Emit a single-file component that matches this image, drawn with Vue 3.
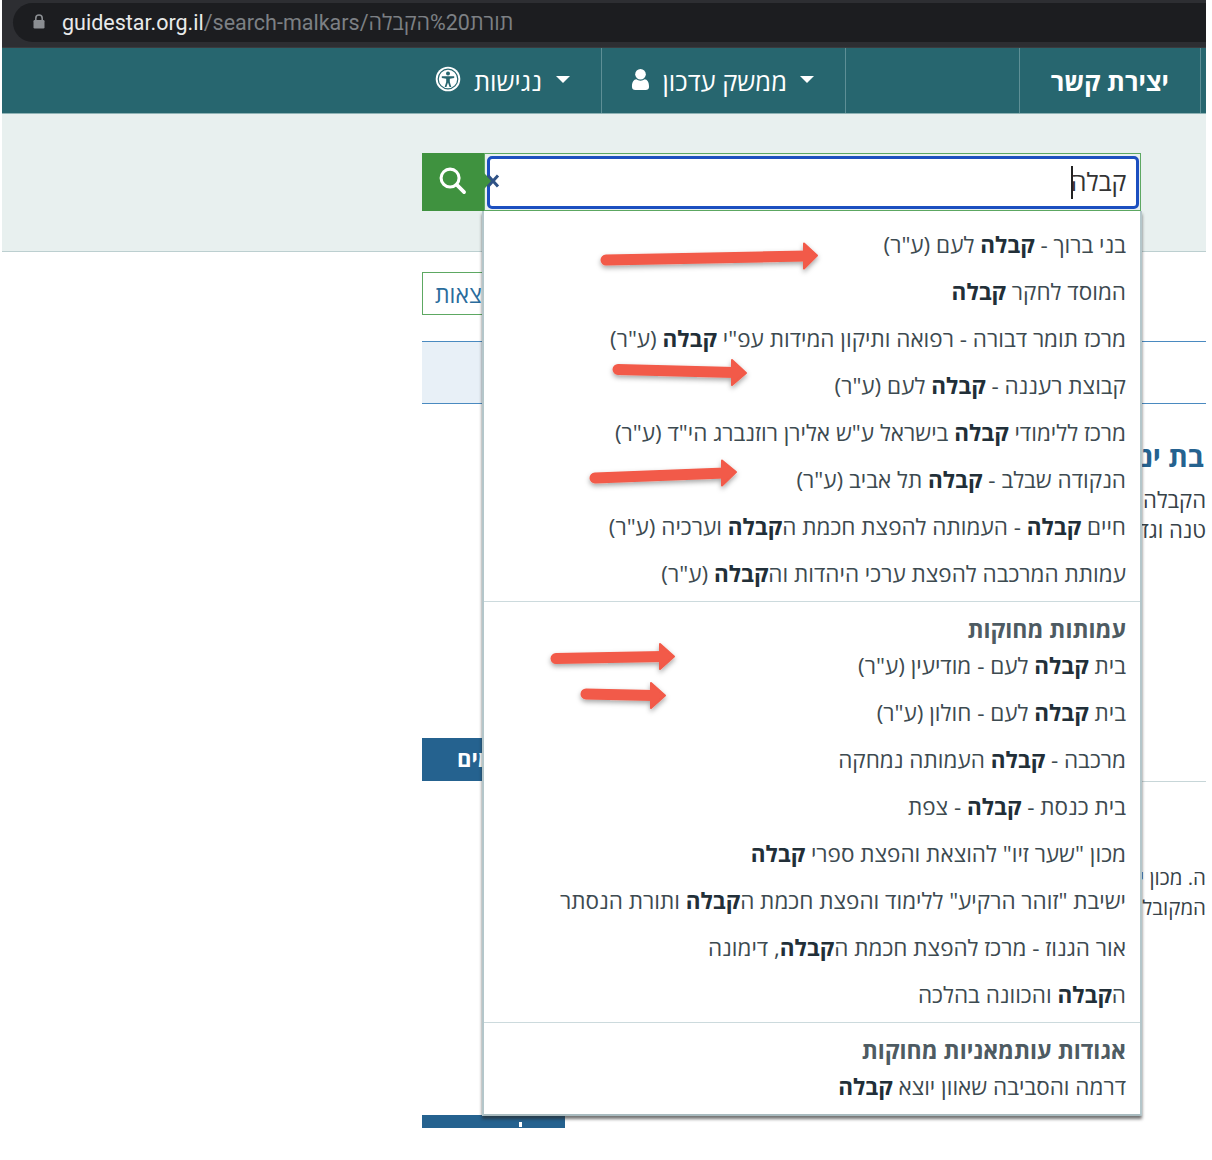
<script setup>
const group1 = [
  'בני ברוך - *קבלה* לעם (ע"ר)',
  'המוסד לחקר *קבלה*',
  'מרכז תומר דבורה - רפואה ותיקון המידות עפ"י *קבלה* (ע"ר)',
  'קבוצת רעננה - *קבלה* לעם (ע"ר)',
  'מרכז ללימודי *קבלה* בישראל ע"ש אלירן רוזנברג הי"ד (ע"ר)',
  'הנקודה שבלב - *קבלה* תל אביב (ע"ר)',
  'חיים *קבלה* - העמותה להפצת חכמת ה*קבלה* וערכיה (ע"ר)',
  'עמותת המרכבה להפצת ערכי היהדות וה*קבלה* (ע"ר)',
]
const group2 = [
  'בית *קבלה* לעם - מודיעין (ע"ר)',
  'בית *קבלה* לעם - חולון (ע"ר)',
  'מרכבה - *קבלה* העמותה נמחקה',
  'בית כנסת - *קבלה* - צפת',
  'מכון "שער זיו" להוצאת והפצת ספרי *קבלה*',
  'ישיבת "זוהר הרקיע" ללימוד והפצת חכמת ה*קבלה* ותורת הנסתר',
  'אור הגנוז - מרכז להפצת חכמת ה*קבלה*, דימונה',
  'ה*קבלה* והכוונה בהלכה',
]
const group3 = ['דרמה והסביבה שאוון יוצא *קבלה*']
const groups = [
  { title: '', rows: group1 },
  { title: 'עמותות מחוקות', rows: group2 },
  { title: 'אגודות עותמאניות מחוקות', rows: group3 },
]
const parts = (s) => s.split('*').map((text, i) => ({ text, bold: i % 2 === 1 }))
const arrows = [
  { x1: 606, y1: 260, x2: 804, y2: 256, tx: 817, ty: 255.5 },
  { x1: 618, y1: 369.5, x2: 732, y2: 372.5, tx: 746, ty: 373 },
  { x1: 595, y1: 478, x2: 722, y2: 473, tx: 736, ty: 472 },
  { x1: 556, y1: 658.5, x2: 660, y2: 656.5, tx: 674, ty: 656.5 },
  { x1: 586, y1: 694, x2: 651, y2: 695.5, tx: 665, ty: 695.5 },
]
const head = (a) => `${a.x2},${a.y2 - 12.5} ${a.tx},${a.ty} ${a.x2},${a.y2 + 12.5}`
</script>

<template>
  <div class="shot">
    <div class="browser">
      <div class="pill">
        <svg class="lock" viewBox="0 0 12 15" width="12" height="15">
          <path d="M2.8 6.5V4.2a3.2 3.2 0 0 1 6.4 0v2.3" fill="none" stroke="#8b8e92" stroke-width="1.6" />
          <rect x="0.5" y="6" width="11" height="8.5" rx="1.2" fill="#8b8e92" />
        </svg>
        <span class="url"><span class="host">guidestar.org.il</span><span class="path">/search-malkars/תורת%20הקבלה</span></span>
      </div>
    </div>

    <nav class="nav">
      <div class="cell cell-edge"></div>
      <div class="cell cell-contact">יצירת קשר</div>
      <div class="cell cell-empty"></div>
      <div class="cell cell-admin">
        <i class="caret"></i>
        <span>ממשק עדכון</span>
        <svg viewBox="0 0 20 24" width="19" height="23">
          <circle cx="10" cy="6.5" r="5.6" fill="#fff" />
          <path d="M1 19.5c0-5 2-7.5 4.6-7.8 1.2 1 2.7 1.5 4.4 1.5s3.200-.5 4.400-1.500c2.600.3 4.600 2.800 4.600 7.800 0 2.300-1.500 3.500-3.500 3.500H4.500C2.500 23 1 21.800 1 19.500z" fill="#fff" />
        </svg>
      </div>
      <div class="cell cell-access">
        <i class="caret"></i>
        <span>נגישות</span>
        <svg viewBox="0 0 26 26" width="26" height="26">
          <circle cx="13" cy="13" r="12.300" fill="#fff" />
          <circle cx="13" cy="13" r="9.800" fill="none" stroke="#27666f" stroke-width="1.200" />
          <circle cx="13" cy="7.600" r="2" fill="#27666f" />
          <path d="M6.800 10.200h12.400v1.700l-4.400.9v3.300l1.500 5h-1.700L13 16.400l-1.600 4.700H9.700l1.500-5v-3.300l-4.400-.9z" fill="#27666f" />
        </svg>
      </div>
    </nav>

    <section class="band">
      <div class="search">
        <button class="go" type="button">
          <svg viewBox="0 0 30 30" width="29" height="29">
            <circle cx="12.500" cy="12.500" r="9.300" fill="none" stroke="#fff" stroke-width="3.200" />
            <path d="M19.500 19.500l7.500 7.500" stroke="#fff" stroke-width="3.800" stroke-linecap="round" />
          </svg>
        </button>
        <div class="field">
          <div class="focus">
            <span class="typed">קבלה</span><i class="cursor"></i>
          </div>
          <span class="notch"></span>
          <svg class="clear" viewBox="0 0 14 16" width="14" height="16">
            <path d="M2 2.500l10 11M12 2.500l-10 11" stroke="#2f5286" stroke-width="3" fill="none" />
          </svg>
        </div>
      </div>
    </section>

    <main class="content">
      <div class="toolbar"><button class="outline" type="button">תוצאות</button></div>
      <div class="tablerow"><div class="paleCell"></div></div>
      <div class="body">
        <aside class="aside">
          <div class="blue first">רשומים</div>
          <div class="blue second"><i class="tip"></i></div>
        </aside>
        <div class="articles">
          <article class="art1">
            <h2>בת ינ</h2>
            <p>הקבלה.</p>
            <p>טנה וגד</p>
          </article>
          <article class="art2">
            <p>ה. מכון י</p>
            <p>המקובלי</p>
          </article>
        </div>
      </div>
    </main>

    <div class="dropdown">
      <div v-for="(g, gi) in groups" :key="gi" class="group">
        <div v-if="g.title" class="title">{{ g.title }}</div>
        <div v-for="(r, ri) in g.rows" :key="ri" class="row"><template v-for="(p, pi) in parts(r)" :key="pi"><b v-if="p.bold">{{ p.text }}</b><template v-else>{{ p.text }}</template></template></div>
      </div>
    </div>

    <svg class="arrows" viewBox="0 0 1204 1128" width="1204" height="1128">
      <defs>
        <filter id="soft" x="-20%" y="-100%" width="140%" height="300%">
          <feDropShadow dx="0" dy="2.500" stdDeviation="2.500" flood-color="#000" flood-opacity="0.35" />
        </filter>
      </defs>
      <g v-for="(a, i) in arrows" :key="i" filter="url(#soft)">
        <line :x1="a.x1" :y1="a.y1" :x2="a.x2 + 3" :y2="a.y2" stroke="#f25a48" stroke-width="11" stroke-linecap="round" />
        <polygon :points="head(a)" fill="#f25a48" stroke="#f25a48" stroke-width="2" stroke-linejoin="round" />
      </g>
    </svg>
  </div>
</template>

<style scoped>
.shot {
  position: relative;
  width: 1204px;
  height: 1128px;
  margin-left: 2px;
  overflow: hidden;
  background: #fff;
  font-family: "Open Sans", "Liberation Sans", sans-serif;
}
.browser {
  height: 48px;
  box-sizing: border-box;
  padding: 3px 0 5px 11px;
  background: #2d2e32;
  border-bottom: 1px solid #3a3b3e;
}
.pill {
  height: 39px;
  display: flex;
  align-items: center;
  gap: 17px;
  padding-left: 20px;
  background: #1c1d20;
  border-radius: 20px 0 0 20px;
  box-sizing: border-box;
}
.lock { flex: none; margin-top: -3px; }
.url { font: 21.500px Roboto, "Open Sans", sans-serif; white-space: nowrap; margin-top: -3px; }
.host { color: #e9eaea; }
.path { color: #7c8084; }

.nav {
  height: 65px;
  display: flex;
  direction: rtl;
  background: #27666f;
  color: #fff;
}
.cell {
  flex: none;
  display: flex;
  align-items: center;
  box-sizing: border-box;
  border-left: 1px solid #5e8f96;
  font-size: 25.500px;
}
.cell-edge { width: 6px; }
.cell-contact { width: 181px; padding-right: 31px; font-weight: 700; }
.cell-empty { width: 174px; }
.cell-admin { width: 244px; padding-right: 31px; gap: 12px; }
.cell-access { border-left: 0; padding-right: 31px; gap: 12px; }
.cell-admin .caret { margin-left: 1px; }
.cell-access .caret { margin-left: 2px; }
.cell-admin svg { margin-top: -2px; }
.cell-access svg { margin-right: 1px; margin-top: -3px; }
.caret {
  width: 0;
  height: 0;
  margin-top: -2px;
  border-left: 7.500px solid transparent;
  border-right: 7.500px solid transparent;
  border-top: 7.500px solid #fff;
}

.band {
  height: 139px;
  box-sizing: border-box;
  padding: 39px 0 0 420px;
  background: #e8f0ef;
  border-top: 1px solid #8fb3b5;
  border-bottom: 1px solid #bccfd0;
}
.search { display: flex; width: 719px; height: 58px; }
.go {
  width: 62px;
  flex: none;
  padding: 0 2px 4px 0;
  border: 0;
  background: #3f923f;
  display: flex;
  align-items: center;
  justify-content: center;
}
.field {
  position: relative;
  flex: 1;
  box-sizing: border-box;
  padding: 1.500px;
  border: 1.500px solid #5da862;
  background: #e8f0ef;
}
.focus {
  height: 100%;
  box-sizing: border-box;
  display: flex;
  direction: rtl;
  align-items: center;
  padding-right: 9px;
  background: #fff;
  border: 3px solid #1c4fc0;
  border-radius: 5px;
}
.typed { color: #333; font-size: 25px; margin-top: -2px; }
.cursor { width: 1.500px; height: 33px; margin-right: -2px; background: #222; }
.notch {
  position: absolute;
  left: -2px;
  top: 18px;
  width: 0;
  height: 0;
  border-top: 9px solid transparent;
  border-bottom: 9px solid transparent;
  border-left: 9px solid #3f923f;
}
.clear { position: absolute; left: 1px; top: 19px; }

.toolbar { height: 43px; margin-top: 20px; padding-left: 420px; }
.outline {
  width: 150px;
  height: 43px;
  padding: 0 0 0 12px;
  direction: rtl;
  text-align: left;
  background: #fff;
  border: 1px solid #5da862;
  color: #2a6c9c;
  font: 23px "Open Sans", "Liberation Sans", sans-serif;
}
.tablerow {
  height: 61px;
  margin: 26px 0 0 420px;
  border-top: 1px solid #4a8ac0;
  border-bottom: 1px solid #4a8ac0;
}
.paleCell { width: 100px; height: 100%; background: #e8f0f7; }

.body { display: flex; padding-left: 420px; }
.aside { width: 143px; flex: none; }
.blue {
  height: 43px;
  background: #25628f;
  color: #fff;
  font-size: 22px;
  font-weight: 700;
  line-height: 41px;
  white-space: nowrap;
  overflow: hidden;
}
.first { margin-top: 334px; padding-left: 35px; }
.second { margin-top: 334px; padding-left: 97px; line-height: 0; }
.tip { display: inline-block; width: 3px; height: 5px; margin-top: 7px; background: #fff; }
.articles { flex: 1; min-width: 0; direction: rtl; color: #374248; overflow: hidden; }
.art1 { height: 378px; box-sizing: border-box; padding-top: 34px; border-bottom: 1px solid #c7d6d8; }
.art1 h2 {
  margin: 0 2px 10px 0;
  color: #25628f;
  font-size: 28px;
  line-height: 36px;
  white-space: nowrap;
}
.art2 { padding-top: 80px; }
.art2 p { font-size: 20.500px; }
p {
  margin: 0;
  font-size: 22px;
  line-height: 30px;
  white-space: nowrap;
}

.dropdown {
  position: absolute;
  left: 480px;
  top: 211px;
  width: 660px;
  height: 905px;
  box-sizing: border-box;
  padding-top: 10px;
  direction: rtl;
  background: #fff;
  border-left: 2px solid #b4c6ca;
  border-right: 2px solid #b4c6ca;
  border-bottom: 2px solid #a9bbbf;
  box-shadow: 0 3px 3px rgba(40, 40, 40, 0.65);
  color: #3d4a50;
}
.group + .group { margin-top: 4px; border-top: 1.500px solid #ccdadd; }
.title {
  height: 40px;
  padding: 11px 14px 0 0;
  box-sizing: border-box;
  color: #4e5b62;
  font-size: 23px;
  line-height: 32px;
  font-weight: 700;
}
.row {
  height: 47px;
  padding-right: 14px;
  font-size: 22.500px;
  line-height: 47px;
  white-space: nowrap;
}
.row b { color: #222f38; font-weight: 700; }
.arrows { position: absolute; left: -2px; top: 0; pointer-events: none; }
</style>
